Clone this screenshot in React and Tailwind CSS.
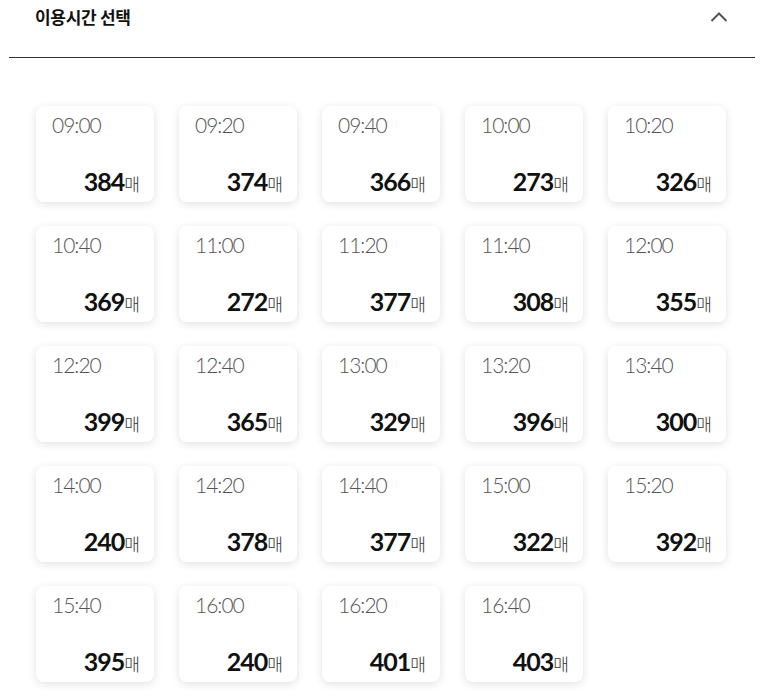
import React from "react";

const slots = [
  ["09:00", 384], ["09:20", 374], ["09:40", 366], ["10:00", 273], ["10:20", 326],
  ["10:40", 369], ["11:00", 272], ["11:20", 377], ["11:40", 308], ["12:00", 355],
  ["12:20", 399], ["12:40", 365], ["13:00", 329], ["13:20", 396], ["13:40", 300],
  ["14:00", 240], ["14:20", 378], ["14:40", 377], ["15:00", 322], ["15:20", 392],
  ["15:40", 395], ["16:00", 240], ["16:20", 401], ["16:40", 403],
];

function TimeCard({ time, count }) {
  return (
    <div className="h-[96px] rounded-lg bg-white shadow-[0_2px_8px_rgba(0,0,0,0.12)] flex flex-col justify-between pl-[16px] pr-[14px] pt-[5px] pb-[8px]">
      <div className="text-[21px] leading-[28px] font-light text-[#555] tracking-[-1px]">{time}</div>
      <div className="flex items-baseline justify-end leading-none">
        <span className="text-[25px] font-bold text-[#111] tracking-[-1px]">{count}</span>
        <span className="text-[17px] font-light text-[#333] font-['Noto_Sans_CJK_KR',sans-serif]">매</span>
      </div>
    </div>
  );
}

export default function App() {
  return (
    <div className="min-h-screen bg-white pl-[9px] pr-[17px] font-['Lato','Noto_Sans_CJK_KR',sans-serif]">
      <div className="h-[58px] flex items-start justify-between border-b border-[#333] pl-[26px] pr-[27px] pt-[4px]">
        <h2 className="text-[17px] font-bold text-[#111] tracking-[-0.3px] font-['Noto_Sans_CJK_KR',sans-serif]">이용시간 선택</h2>
        <svg width="18" height="12" viewBox="0 0 18 12" className="mt-[7px]">
          <path d="M1.5 10 L9 2.5 L16.5 10" fill="none" stroke="#555" strokeWidth="2" />
        </svg>
      </div>
      <div className="grid grid-cols-[repeat(5,118px)] gap-x-[25px] gap-y-[24px] pl-[27px] pt-[48px] pb-[20px]">
        {slots.map(([t, c]) => (
          <TimeCard key={t} time={t} count={c} />
        ))}
      </div>
    </div>
  );
}
